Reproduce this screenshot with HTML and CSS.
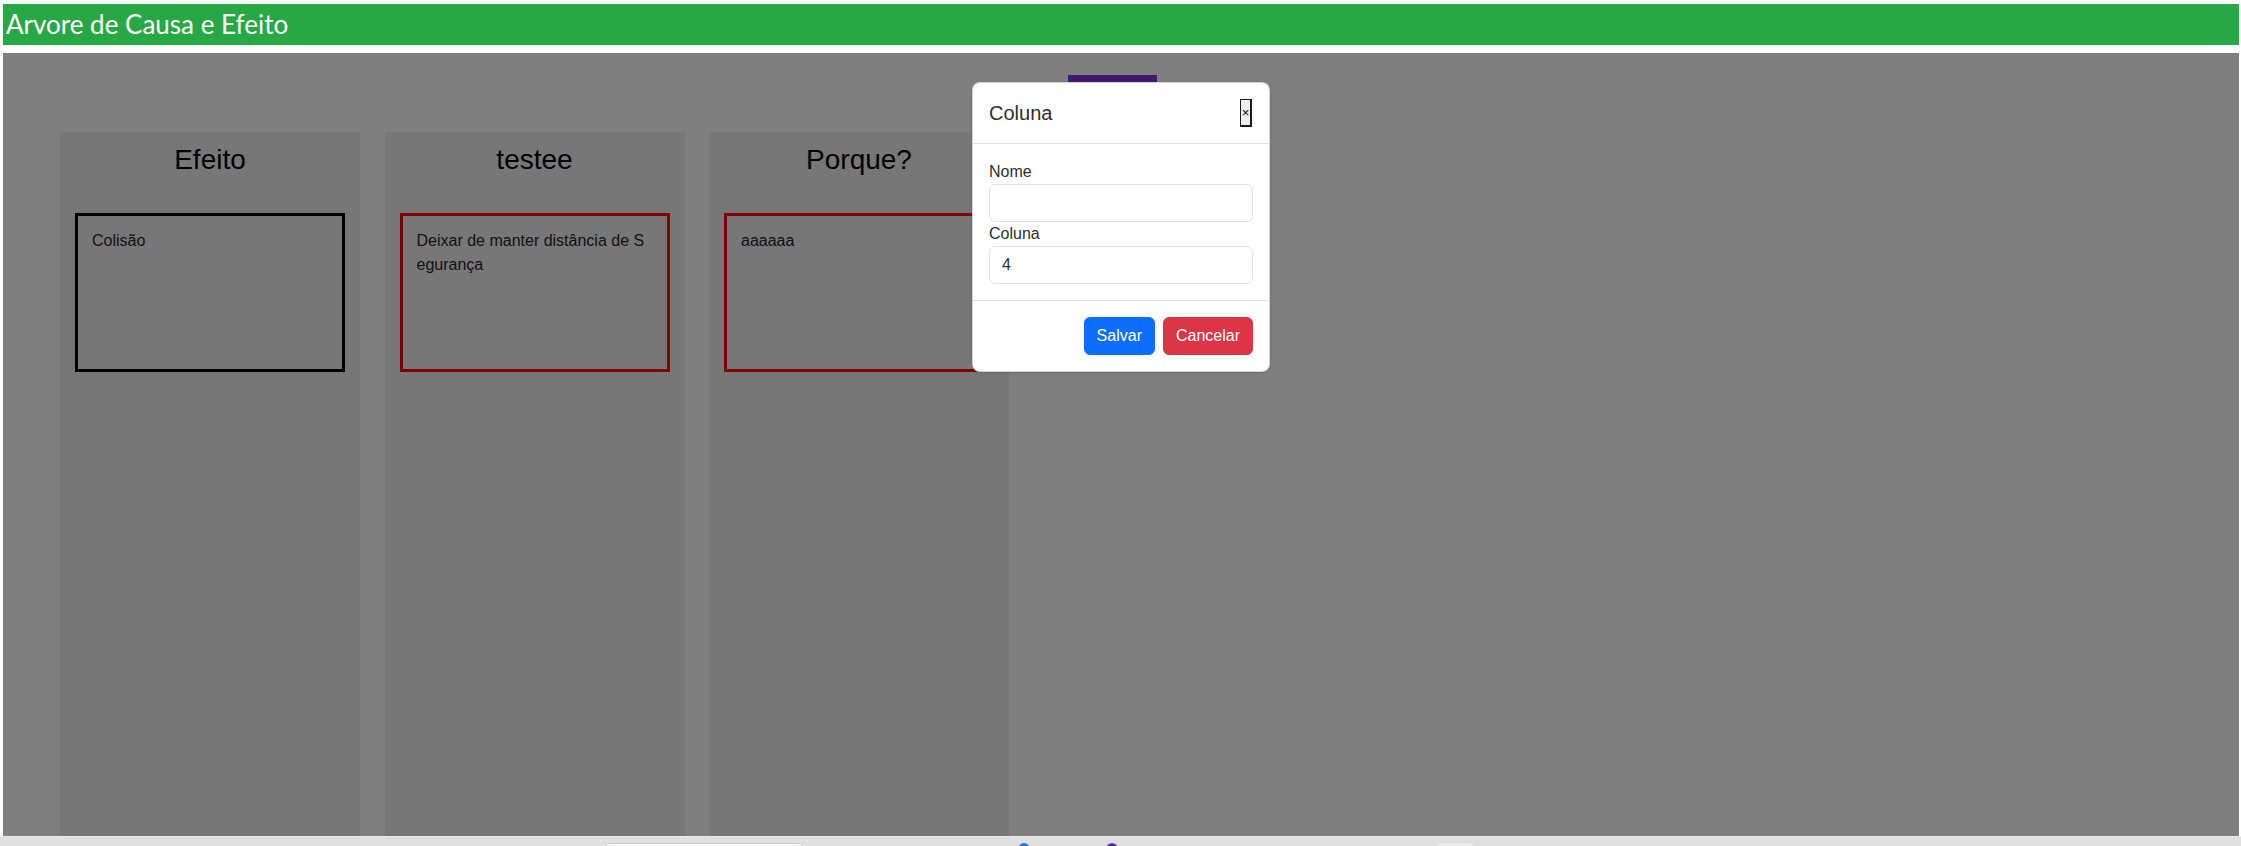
FILE: index.html
```html
<!DOCTYPE html>
<html lang="pt">
<head>
<meta charset="utf-8">
<title>Arvore de Causa e Efeito</title>
<link rel="stylesheet" href="styles.css">
</head>
<body>
<div class="page">
  <header class="topbar">Arvore de Causa e Efeito</header>
  <main class="board">
    <div class="columns">
      <section class="col">
        <h2 class="col-title">Efeito</h2>
        <div class="card card-effect">Colisão</div>
      </section>
      <section class="col">
        <h2 class="col-title">testee</h2>
        <div class="card card-cause">Deixar de manter distância de Segurança</div>
      </section>
      <section class="col">
        <h2 class="col-title">Porque?</h2>
        <div class="card card-cause">aaaaaa</div>
      </section>
      <button class="add-col" type="button"></button>
    </div>
    <div class="backdrop"></div>
    <div class="modal">
      <div class="modal-content">
        <div class="modal-header">
          <h5 class="modal-title">Coluna</h5>
          <button class="btn-x" type="button">×</button>
        </div>
        <div class="modal-body">
          <label class="form-label">Nome</label>
          <input class="form-control" type="text" value="">
          <label class="form-label">Coluna</label>
          <input class="form-control" type="text" value="4">
        </div>
        <div class="modal-footer">
          <button class="btn btn-primary" type="button">Salvar</button>
          <button class="btn btn-danger" type="button">Cancelar</button>
        </div>
      </div>
    </div>
  </main>
</div>
<div class="taskbar">
  <span class="tb-search"></span>
  <span class="tb-dot tb-blue"></span>
  <span class="tb-dot tb-purple"></span>
  <span class="tb-pill"></span>
</div>
</body>
</html>
```

FILE: styles.css
```css
html, body {
  margin: 0;
  padding: 0;
  overflow: hidden;
  background: #ffffff;
}

body {
  font-family: "Liberation Sans", Arial, sans-serif;
  color: #212529;
}

.page {
  padding: 4px 2px 0 3px;
}

.topbar {
  height: 41px;
  line-height: 41px;
  background: #28a745;
  color: #ffffff;
  font-family: "Lato", "Open Sans", sans-serif;
  font-size: 26px;
  padding-left: 3px;
  margin-bottom: 8px;
  white-space: nowrap;
}

.board {
  position: relative;
  height: 783px;
  overflow: hidden;
  background: #ffffff;
}

.columns {
  display: flex;
  align-items: stretch;
  height: 100%;
  padding-left: 57px;
  gap: 24.5px;
}

.col {
  width: 300px;
  flex: 0 0 300px;
  margin-top: 79px;
  padding-top: 11px;
  background: #eeeeee;
  box-sizing: border-box;
}

.col-title {
  margin: 0 0 36px;
  font-size: 28px;
  font-weight: normal;
  line-height: 34px;
  text-align: center;
  color: #000000;
}

.card {
  height: 159px;
  margin: 0 15px;
  box-sizing: border-box;
  padding: 13px 14px;
  border: 3px solid #000000;
  font-size: 16px;
  line-height: 24px;
  color: #212529;
  word-break: break-all;
}

.card-cause {
  border-color: #ff0000;
}

.add-col {
  align-self: flex-start;
  width: 89px;
  height: 40px;
  margin-top: 22px;
  margin-left: 34.5px;
  padding: 0;
  border: none;
  background: #8530de;
}

.backdrop {
  position: absolute;
  inset: 0;
  background: rgba(0, 0, 0, 0.5);
}

.modal {
  position: absolute;
  inset: 0;
  display: flex;
  justify-content: center;
  align-items: flex-start;
}

.modal-content {
  width: 298px;
  margin-top: 29px;
  background: #ffffff;
  border: 1px solid rgba(0, 0, 0, 0.175);
  border-radius: 8px;
  box-sizing: border-box;
  box-shadow: 0 1px 3px rgba(0, 0, 0, 0.15);
}

.modal-header {
  display: flex;
  align-items: center;
  justify-content: space-between;
  padding: 16px;
  border-bottom: 1px solid #dee2e6;
}

.modal-title {
  margin: 0;
  font-size: 20px;
  font-weight: normal;
  line-height: 24px;
  color: #2b2f33;
}

.btn-x {
  width: 12px;
  height: 28px;
  padding: 0;
  margin-right: 1px;
  box-sizing: border-box;
  background: #efefef;
  border-style: solid;
  border-color: #1a1a1a;
  border-width: 1px 2px 2px 1px;
  font-family: "Liberation Sans", Arial, sans-serif;
  font-size: 13px;
  line-height: 1;
  color: #000000;
  overflow: visible;
}

.modal-body {
  padding: 16px;
}

.form-label {
  display: block;
  font-size: 16px;
  line-height: 24px;
  color: #2b2f33;
}

.form-control {
  display: block;
  width: 100%;
  height: 38px;
  box-sizing: border-box;
  padding: 6px 12px;
  border: 1px solid #dee2e6;
  border-radius: 6px;
  font-family: "Liberation Sans", Arial, sans-serif;
  font-size: 16px;
  line-height: 24px;
  color: #2b2f33;
  background: #ffffff;
}

.modal-footer {
  display: flex;
  justify-content: flex-end;
  align-items: center;
  padding: 12px;
  border-top: 1px solid #dee2e6;
}

.btn {
  margin: 4px;
  height: 38px;
  padding: 6px 12px;
  border: 1px solid transparent;
  border-radius: 6px;
  font-family: "Liberation Sans", Arial, sans-serif;
  font-size: 16px;
  line-height: 24px;
  color: #ffffff;
}

.btn-primary {
  background: #0d6efd;
  border-color: #0d6efd;
}

.btn-danger {
  background: #dc3545;
  border-color: #dc3545;
}

.taskbar {
  display: flex;
  align-items: flex-start;
  height: 40px;
  padding-top: 6px;
  box-sizing: border-box;
  background: #e0e0e0;
  border-top: 1px solid #ebebeb;
}

.tb-search {
  width: 198px;
  height: 30px;
  margin-left: 605px;
  background: #fafafa;
  border: 1px solid #d0d0d0;
  border-radius: 4px;
  box-sizing: border-box;
}

.tb-dot {
  width: 12px;
  height: 12px;
  border-radius: 50%;
}

.tb-blue {
  margin-left: 215px;
  background: #1a7fe0;
}

.tb-purple {
  margin-left: 76px;
  background: #5b2bb0;
}

.tb-pill {
  width: 36px;
  height: 30px;
  margin-left: 319px;
  background: #ececec;
  border-radius: 4px;
}
```
